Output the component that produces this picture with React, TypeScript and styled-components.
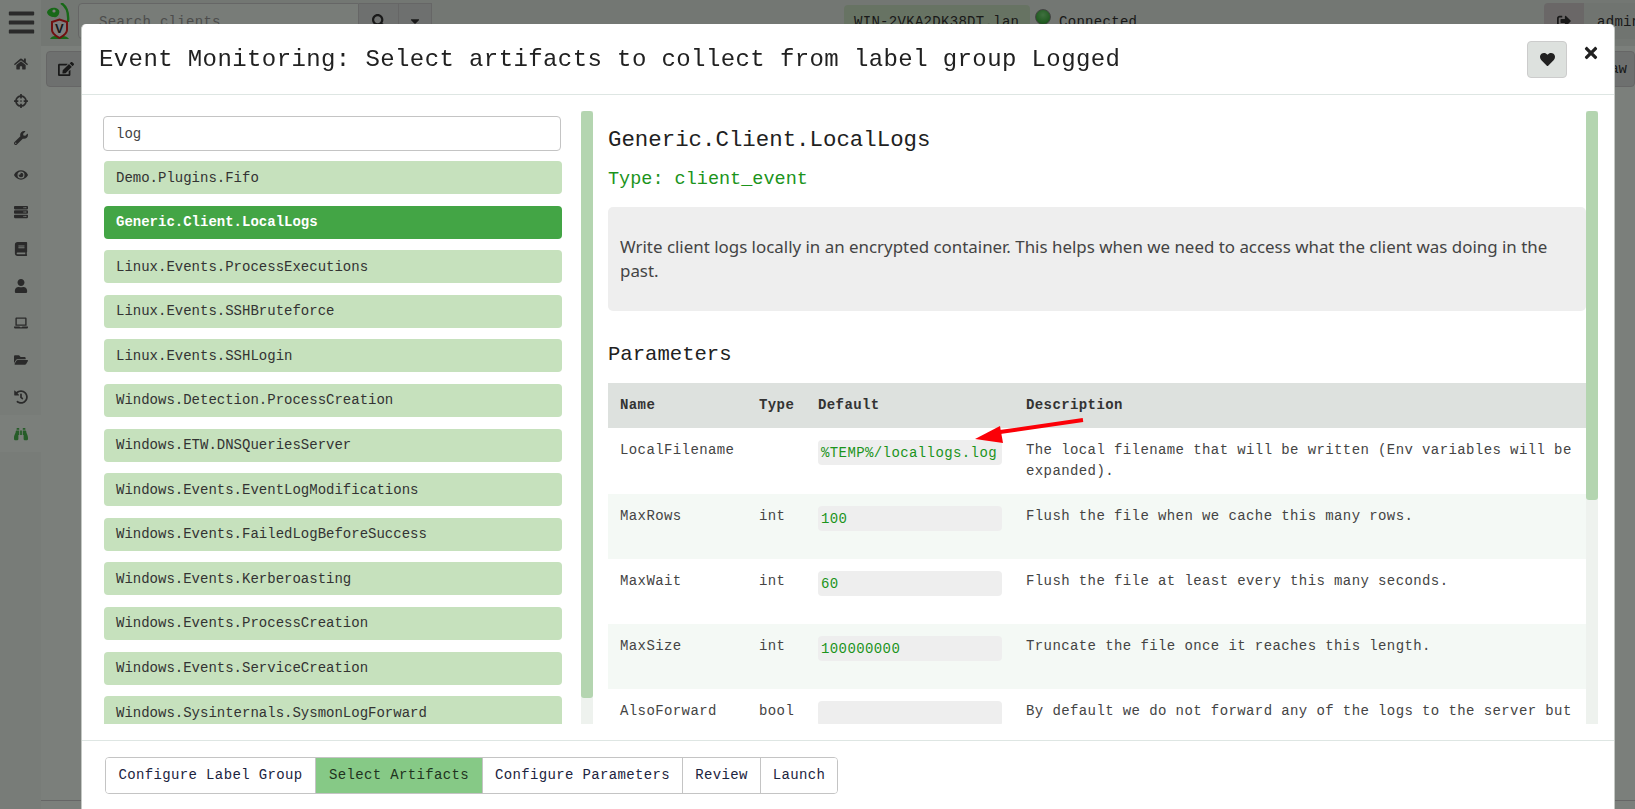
import styled, { createGlobalStyle } from "styled-components"
import {
  FaBars,
  FaBinoculars,
  FaBook,
  FaCaretDown,
  FaCrosshairs,
  FaEdit,
  FaEye,
  FaFolderOpen,
  FaHeart,
  FaHistory,
  FaHome,
  FaLaptop,
  FaSearch,
  FaServer,
  FaSignOutAlt,
  FaTimes,
  FaUser,
  FaWrench
} from "react-icons/fa"

const mono = `"Liberation Mono", "DejaVu Sans Mono", monospace`

const GlobalStyle = createGlobalStyle`
  html, body {
    margin: 0;
    height: 100%;
    overflow: hidden;
    font-family: ${mono};
    font-size: 14px;
  }
  * { box-sizing: border-box; }
`

const Page = styled.div`
    display: flex;
    height: 809px;
    background: #f6fff6;
  `,
  Sidebar = styled.nav`
    width: 41px;
    flex: none;
    display: flex;
    flex-direction: column;
    background: #f0f9f0;
    color: #555;
  `,
  Burger = styled.div`
    height: 45px;
    display: flex;
    align-items: center;
    justify-content: center;
    padding-left: 2px;
    font-size: 29px;
  `,
  NavItem = styled.div<{ $active?: boolean }>`
    height: 37px;
    display: flex;
    align-items: center;
    justify-content: center;
    font-size: 14px;
    background: ${p => (p.$active ? "#f6fff6" : "transparent")};
    color: ${p => (p.$active ? "#4cb850" : "#555")};
  `,
  Column = styled.div`
    flex: 1;
    min-width: 0;
    display: flex;
    flex-direction: column;
  `,
  TopBar = styled.header`
    height: 46px;
    display: flex;
    align-items: flex-start;
    padding: 3px 0 0 6px;
    background: #e6efe6;
    letter-spacing: 0.3px;
  `,
  Logo = styled.svg`
    width: 24px;
    height: 36px;
    flex: none;
  `,
  SearchGroup = styled.div`
    margin-left: 7px;
    display: flex;
    height: 36px;
  `,
  SearchInput = styled.div`
    width: 281px;
    padding: 10px 20px;
    border: 1px solid #ccc;
    border-radius: 4px 0 0 4px;
    background: #f0f9f0;
    color: #999;
  `,
  SearchButton = styled.div<{ $width: number }>`
    width: ${p => p.$width}px;
    display: flex;
    align-items: center;
    justify-content: center;
    border: 1px solid #ccc;
    border-left: 0;
    background: #dde1de;
    color: #333;
  `,
  Status = styled.div`
    margin-left: 412px;
    display: flex;
    align-items: flex-start;
    padding-top: 2px;
  `,
  HostChip = styled.div`
    width: 186px;
    height: 30px;
    padding: 9px 10px;
    border-radius: 4px;
    background: #cfe6c6;
    color: #333;
  `,
  Dot = styled.span`
    width: 16px;
    height: 16px;
    margin: 4px 8px 0 5px;
    border-radius: 50%;
    background: radial-gradient(circle at 50% 35%, #7fe07f, #22a022);
    border: 1px solid #888;
  `,
  ConnectedText = styled.span`
    padding-top: 9px;
    color: #333;
  `,
  UserGroup = styled.div`
    margin-left: auto;
    display: flex;
    height: 36px;
  `,
  LogoutButton = styled.div`
    width: 40px;
    display: flex;
    align-items: center;
    justify-content: center;
    background: #d4cfcf;
    border-radius: 4px 0 0 4px;
    color: #333;
  `,
  UserName = styled.div`
    width: 51px;
    padding: 11px 0 0 13px;
    background: #e0e8e0;
    color: #333;
    overflow: hidden;
  `,
  Main = styled.main`
    flex: 1;
    display: flex;
    justify-content: space-between;
    align-items: flex-start;
    padding: 5px 0 0 5px;
    border-bottom: 1px solid #ccc;
    margin-bottom: 8px;
  `,
  ToolButton = styled.div<{ $wide?: boolean }>`
    height: 36px;
    width: ${p => (p.$wide ? "60px" : "40px")};
    display: flex;
    align-items: center;
    justify-content: ${p => (p.$wide ? "flex-end" : "center")};
    padding-right: ${p => (p.$wide ? "7px" : "0")};
    border: 1px solid #ccc;
    border-radius: 4px;
    background: #dde1de;
    color: #333;
    font-size: ${p => (p.$wide ? "14px" : "16px")};
  `,
  Backdrop = styled.div`
    position: fixed;
    inset: 0;
    background: rgba(0, 0, 0, 0.5);
    overflow: hidden;
    padding: 24px 0 0 81px;
  `,
  Dialog = styled.section`
    position: relative;
    width: 1534px;
    height: 790px;
    display: flex;
    flex-direction: column;
    background: #fff;
    border-radius: 5px;
    border: 1px solid #c4c8c4;
    border-width: 0 1px 0 1px;
  `,
  Header = styled.div`
    height: 71px;
    flex: none;
    display: flex;
    align-items: flex-start;
    padding: 17px 47px 0 17px;
    border-bottom: 1px solid #dee6e3;
    position: relative;
  `,
  Title = styled.h1`
    flex: 1;
    margin: 0;
    font-size: 24px;
    font-weight: 400;
    line-height: 37px;
    letter-spacing: 0.4px;
    color: #212121;
  `,
  HeartButton = styled.button`
    width: 40px;
    height: 37px;
    padding: 0;
    display: flex;
    align-items: center;
    justify-content: center;
    background: #dde1de;
    border: 1px solid #ccc;
    border-radius: 4px;
    color: #212121;
    font-size: 15px;
  `,
  CloseButton = styled.span`
    position: absolute;
    top: 20px;
    right: 14px;
    font-size: 18px;
    line-height: 18px;
    color: #212121;
  `,
  Body = styled.div`
    flex: none;
    height: 645px;
    padding: 16px;
    display: flex;
  `,
  Pane = styled.div<{ $width?: number }>`
    display: flex;
    min-width: 0;
    flex: ${p => (p.$width ? `0 0 ${p.$width}px` : "1")};
  `,
  ScrollArea = styled.div<{ $padding: string }>`
    flex: 1;
    min-width: 0;
    overflow: hidden;
    padding: ${p => p.$padding};
  `,
  ScrollTrack = styled.div`
    width: 12px;
    flex: none;
    background: #eef2ee;
  `,
  ScrollThumb = styled.div<{ $height: number }>`
    height: ${p => p.$height}px;
    background: #b4d5b0;
    border-radius: 3px;
  `,
  SearchBox = styled.input`
    display: block;
    width: 458px;
    height: 35px;
    margin-bottom: 10px;
    padding: 0 12px;
    border: 1px solid #c4c4c4;
    border-radius: 4px;
    outline: none;
    font: 14px ${mono};
    color: #444;
  `,
  ArtifactList = styled.div`
    display: flex;
    flex-direction: column;
    gap: 11.6px;
    margin-left: 1px;
    width: 458px;
  `,
  ArtifactRow = styled.div<{ $active?: boolean }>`
    height: 33px;
    flex: none;
    padding: 0 12px;
    display: flex;
    align-items: center;
    border-radius: 4px;
    background: ${p => (p.$active ? "#43a545" : "#c6e1bd")};
    color: ${p => (p.$active ? "#fff" : "#333")};
    font-weight: ${p => (p.$active ? 700 : 400)};
  `,
  ArtifactName = styled.h2`
    margin: 13px 0 0;
    font-size: 22.4px;
    font-weight: 400;
    line-height: 32px;
    color: #212121;
  `,
  ArtifactType = styled.div`
    margin-top: 12px;
    font-size: 18.5px;
    line-height: 24px;
    color: #1c941c;
  `,
  Description = styled.div`
    margin-top: 15px;
    height: 104px;
    padding: 28px 12px 0;
    border-radius: 5px;
    background: #eee;
    font-family: "Noto Sans", sans-serif;
    font-size: 16.9px;
    line-height: 24px;
    color: #444;
  `,
  SectionTitle = styled.h3`
    margin: 30px 0 0;
    font-size: 20.6px;
    font-weight: 400;
    line-height: 28px;
    color: #212121;
  `,
  ParamTable = styled.table`
    width: 978px;
    margin-top: 14px;
    table-layout: fixed;
    border-collapse: collapse;
    letter-spacing: 0.4px;
    line-height: 21px;
    color: #444;

    th {
      height: 45px;
      padding: 0 12px;
      background: #dde1de;
      text-align: left;
      color: #333;
    }
    td {
      padding: 12px;
      vertical-align: top;
    }
    tbody tr:nth-child(even) {
      background: #f4f9f5;
    }
  `,
  DefaultValue = styled.div`
    height: 25px;
    margin-bottom: 16px;
    padding: 3px 3px 0;
    border-radius: 4px;
    background: #eee;
    color: #1c941c;
    white-space: nowrap;
  `,
  Footer = styled.div`
    flex: none;
    height: 74px;
    padding: 16px 23px;
    border-top: 1px solid #dee6e3;
  `,
  Stepper = styled.div`
    display: inline-flex;
    height: 37px;
    border: 1px solid #c4c4c4;
    border-radius: 4px;
    overflow: hidden;
  `,
  Step = styled.div<{ $active?: boolean; $width: number }>`
    width: ${p => p.$width}px;
    display: flex;
    align-items: center;
    justify-content: center;
    padding-bottom: 2px;
    letter-spacing: 0.36px;
    background: ${p => (p.$active ? "#86c986" : "#fff")};
    color: ${p => (p.$active ? "#1f3320" : "#1c2440")};
    & + & {
      border-left: 1px solid #c4c4c4;
    }
  `,
  Arrow = styled.svg`
    position: absolute;
    left: 888px;
    top: 391px;
    width: 120px;
    height: 34px;
  `

const navIcons = [
  FaHome,
  FaCrosshairs,
  FaWrench,
  FaEye,
  FaServer,
  FaBook,
  FaUser,
  FaLaptop,
  FaFolderOpen,
  FaHistory
]

const artifacts = [
  "Demo.Plugins.Fifo",
  "Generic.Client.LocalLogs",
  "Linux.Events.ProcessExecutions",
  "Linux.Events.SSHBruteforce",
  "Linux.Events.SSHLogin",
  "Windows.Detection.ProcessCreation",
  "Windows.ETW.DNSQueriesServer",
  "Windows.Events.EventLogModifications",
  "Windows.Events.FailedLogBeforeSuccess",
  "Windows.Events.Kerberoasting",
  "Windows.Events.ProcessCreation",
  "Windows.Events.ServiceCreation",
  "Windows.Sysinternals.SysmonLogForward"
]

const params = [
  {
    name: "LocalFilename",
    type: "",
    value: "%TEMP%/locallogs.log",
    text: "The local filename that will be written (Env variables will be expanded)."
  },
  {
    name: "MaxRows",
    type: "int",
    value: "100",
    text: "Flush the file when we cache this many rows."
  },
  {
    name: "MaxWait",
    type: "int",
    value: "60",
    text: "Flush the file at least every this many seconds."
  },
  {
    name: "MaxSize",
    type: "int",
    value: "100000000",
    text: "Truncate the file once it reaches this length."
  },
  {
    name: "AlsoForward",
    type: "bool",
    value: "",
    text: "By default we do not forward any of the logs to the server but"
  }
]

const steps = [
  { label: "Configure Label Group", width: 209 },
  { label: "Select Artifacts", width: 167, active: true },
  { label: "Configure Parameters", width: 200 },
  { label: "Review", width: 78 },
  { label: "Launch", width: 77 }
]

function VeloLogo() {
  return (
    <Logo viewBox="0 0 24 36">
      <path
        d="M14 0c5 3 8 9 7 19"
        fill="none"
        stroke="#30d030"
        strokeWidth="2.4"
      />
      <path
        d="M0 9c1-3 5-5 9-4 3 1 4 3 3 6-1 2-3 4-5 3-3 0-7-2-7-5z"
        fill="#30d030"
      />
      <circle cx="7" cy="8" r="1.6" fill="#fff" />
      <path d="M3 36c1-2 3-3 5-3h8c2 0 5 1 6 3z" fill="#30d030" />
      <path
        d="M5 19l7.5-2.5L20 19v8c0 4-4 6-7.500 8-3.500-2-7.500-4-7.500-8z"
        fill="#fff"
        stroke="#e02020"
        strokeWidth="2"
      />
      <text
        x="12.500"
        y="30"
        textAnchor="middle"
        fontSize="13"
        fontFamily="Liberation Sans, sans-serif"
        fontWeight="700"
        fill="#333"
      >
        V
      </text>
    </Logo>
  )
}

export default function App() {
  return (
    <>
      <GlobalStyle />
      <Page>
        <Sidebar>
          <Burger>
            <FaBars />
          </Burger>
          {navIcons.map((Icon, i) => (
            <NavItem key={i}>
              <Icon />
            </NavItem>
          ))}
          <NavItem $active>
            <FaBinoculars />
          </NavItem>
        </Sidebar>
        <Column>
          <TopBar>
            <VeloLogo />
            <SearchGroup>
              <SearchInput>Search clients</SearchInput>
              <SearchButton $width={40}>
                <FaSearch />
              </SearchButton>
              <SearchButton $width={33}>
                <FaCaretDown />
              </SearchButton>
            </SearchGroup>
            <Status>
              <HostChip>WIN-2VKA2DK38DT.lan</HostChip>
              <Dot />
              <ConnectedText>Connected</ConnectedText>
            </Status>
            <UserGroup>
              <LogoutButton>
                <FaSignOutAlt />
              </LogoutButton>
              <UserName>admin</UserName>
            </UserGroup>
          </TopBar>
          <Main>
            <ToolButton>
              <FaEdit />
            </ToolButton>
            <ToolButton $wide>Raw</ToolButton>
          </Main>
        </Column>
      </Page>
      <Backdrop>
        <Dialog>
          <Header>
            <Title>
              Event Monitoring: Select artifacts to collect from label group
              Logged
            </Title>
            <HeartButton>
              <FaHeart />
            </HeartButton>
            <CloseButton>
              <FaTimes />
            </CloseButton>
          </Header>
          <Body>
            <Pane $width={495}>
              <ScrollArea $padding="5px 0 0 5px">
                <SearchBox defaultValue="log" />
                <ArtifactList>
                  {artifacts.map(name => (
                    <ArtifactRow
                      key={name}
                      $active={name === "Generic.Client.LocalLogs"}
                    >
                      {name}
                    </ArtifactRow>
                  ))}
                </ArtifactList>
              </ScrollArea>
              <ScrollTrack>
                <ScrollThumb $height={587} />
              </ScrollTrack>
            </Pane>
            <Pane>
              <ScrollArea $padding="0 0 0 15px">
                <ArtifactName>Generic.Client.LocalLogs</ArtifactName>
                <ArtifactType>Type: client_event</ArtifactType>
                <Description>
                  Write client logs locally in an encrypted container. This
                  helps when we need to access what the client was doing in the
                  past.
                </Description>
                <SectionTitle>Parameters</SectionTitle>
                <ParamTable>
                  <colgroup>
                    <col width="139" />
                    <col width="59" />
                    <col width="208" />
                    <col />
                  </colgroup>
                  <thead>
                    <tr>
                      <th>Name</th>
                      <th>Type</th>
                      <th>Default</th>
                      <th>Description</th>
                    </tr>
                  </thead>
                  <tbody>
                    {params.map(param => (
                      <tr key={param.name}>
                        <td>{param.name}</td>
                        <td>{param.type}</td>
                        <td>
                          <DefaultValue>{param.value}</DefaultValue>
                        </td>
                        <td>{param.text}</td>
                      </tr>
                    ))}
                  </tbody>
                </ParamTable>
              </ScrollArea>
              <ScrollTrack>
                <ScrollThumb $height={389} />
              </ScrollTrack>
            </Pane>
          </Body>
          <Footer>
            <Stepper>
              {steps.map(step => (
                <Step key={step.label} $active={step.active} $width={step.width}>
                  {step.label}
                </Step>
              ))}
            </Stepper>
          </Footer>
          <Arrow viewBox="0 0 120 34">
            <path d="M113 5L30 17" stroke="#fb0007" strokeWidth="4" />
            <path d="M5 24L30 11L33 28Z" fill="#fb0007" />
          </Arrow>
        </Dialog>
      </Backdrop>
    </>
  )
}
